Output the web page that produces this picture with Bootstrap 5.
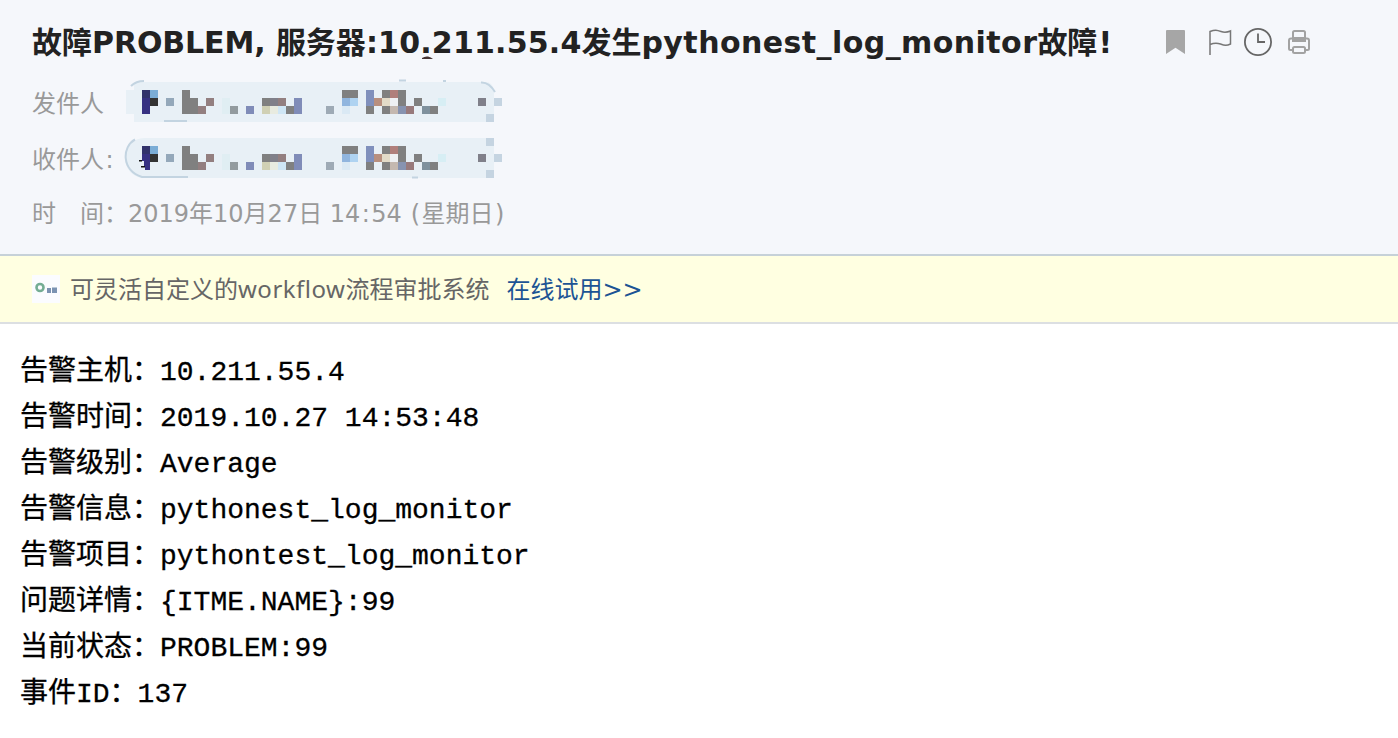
<!DOCTYPE html>
<html lang="zh-CN">
<head>
<meta charset="utf-8">
<title>故障PROBLEM</title>
<meta name="viewport" content="width=device-width, initial-scale=1">
<link href="https://cdn.jsdelivr.net/npm/bootstrap@5.3.0/dist/css/bootstrap.min.css" rel="stylesheet">
<style>
body{font-family:"DejaVu Sans","Noto Sans CJK SC",sans-serif;font-size:24px;background:#fff;color:#000;overflow:hidden}
.mail-head{height:256px;background:#f5f7fb;border-bottom:2px solid #c6d1d8;padding:20px 32px 0}
.mail-title{font-size:30px;font-weight:700;line-height:46px;height:46px;color:#222;width:1132px;margin:0}
.mail-title .lat{letter-spacing:-.1px}
.mail-title .ip{letter-spacing:.2px}
.mail-title .item{letter-spacing:.43px}
.mail-title .bang{margin-left:1px}
.speck{left:390px;top:36px}
.tools{padding-top:8px;height:46px}
.meta-wrap{height:112px}
.meta-labels{width:94px;padding-top:20px;row-gap:20px}
.meta-row{color:#999;line-height:36px}
.meta-time{margin-top:18px}
.colon{margin:0 1.4px}
.mosaic{margin:12px 0 0 -2px}
.ad-bar{height:68px;background:#ffffe1;border-bottom:2px solid #dcdfe2;padding:0 32px;color:#666;font-family:"Noto Sans","Noto Sans CJK SC",sans-serif}
.ad-bar a{color:#1d5494;margin-left:17px}
.ad-text{margin-left:10px}
.wf{letter-spacing:.5px}
.gt{font-family:"DejaVu Sans",sans-serif;line-height:1}
.mail-body{font-family:"Liberation Mono","Noto Sans CJK SC",monospace;font-size:28px;line-height:46px;padding:26px 20px;-webkit-text-stroke:.3px #000}
</style>
</head>
<body>
<header class="mail-head">
  <div class="d-flex">
    <h1 class="mail-title text-nowrap position-relative">故障<span class="lat">PROBLEM, </span>服务器<span class="ip">:10.211.55.4</span>发生<span class="item">pythonest_log_monitor</span>故障<span class="bang">!</span><svg class="speck position-absolute" width="11" height="4" viewBox="0 0 11 4"><path d="M0 2q3-2 6-1.500Q9 1 11 3H0z" fill="#433"/></svg></h1>
    <div class="tools">
      <svg class="d-block" width="148" height="30" viewBox="1164 28 148 30" fill="none">
        <path d="M1167 30h17q1 0 1 1v23l-9.500-6.200-9.500 6.200V31q0-1 1-1z" fill="#a6a6a6"/>
        <path d="M1210 55V31.500c5-2 7-1.500 11 0s6 1 9.500-.5v13c-4 2-6 1.500-10 0s-6-1.500-10.500.5" stroke="#777" stroke-width="1.500"/>
        <circle cx="1258" cy="42" r="13.100" stroke="#666" stroke-width="1.800"/>
        <path d="M1258 33.500V42h7" stroke="#666" stroke-width="1.800"/>
        <g stroke="#a2a2a2" stroke-width="2"><path d="M1293 50h-2.500q-1.500 0-1.500-1.500v-8q0-2 2-2h16q2 0 2 2v8q0 1.500-1.500 1.500h-2.500"/><rect x="1293" y="31" width="12" height="10" rx="1.500"/><rect x="1293" y="47" width="12" height="6" rx="1.500"/></g>
        <path d="M1292 37h14v5h-14z" fill="#a2a2a2"/>
      </svg>
    </div>
  </div>
  <div class="d-flex meta-wrap">
    <div class="d-flex flex-column meta-row meta-labels"><span class="text-nowrap">发件人</span><span class="text-nowrap">收件人<span class="colon">:</span></span></div>
    <svg class="mosaic" width="380" height="102" viewBox="124 78 380 102">
      <defs><g id="cells" shape-rendering="crispEdges">
        <path fill="#32326b" d="M142 0h8v8h-8z"/><path fill="#373182" d="M142 8h8v16h-8z"/><path fill="#7badd6" d="M150 0h8v8h-8z"/><path fill="#333" d="M150 8h8v8h-8z"/>
        <path fill="#94a8ba" d="M166 8h8v8h-8z"/><path fill="#808080" d="M182 0h8v8h8v16h-16zM262 8h8v8h-8zM286 16h8v8h-8zM342 0h16v8h-16zM366 16h8v8h-8zM382 0h8v8h-8zM398 0h8v16h-8zM382 16h8v8h-8zM414 8h8v8h-8zM430 16h8v8h-8z"/>
        <path fill="#937f80" d="M198 16h8v8h-8zM206 8h8v8h-8zM278 8h8v8h-8z"/><path fill="#e0eef3" d="M222 8h8v16h-8z"/><path fill="#939b9f" d="M230 16h8v8h-8z"/>
        <path fill="#808cb8" d="M246 16h8v8h-8zM294 8h8v16h-8z"/><path fill="#80808a" d="M270 8h8v8h-8zM478 8h8v8h-8z"/><path fill="#d0d0b4" d="M262 16h8v8h-8z"/><path fill="#e8ebe0" d="M270 16h8v8h-8z"/><path fill="#cfe6f5" d="M278 16h8v8h-8z"/>
        <path fill="#9eaab5" d="M326 16h8v8h-8z"/><path fill="#90b5de" d="M342 8h8v8h-8z"/><path fill="#afd3f1" d="M350 8h8v8h-8z"/><path fill="#dae9f4" d="M342 16h8v8h-8z"/><path fill="#8090bc" d="M366 0h8v16h-8z"/><path fill="#b88f7e" d="M374 8h8v8h-8z"/><path fill="#b07f7b" d="M390 0h8v8h-8z"/>
        <path fill="#e3dbc8" d="M382 8h8v8h-8z"/><path fill="#eef0f3" d="M390 8h8v8h-8z"/><path fill="#c4b8b0" d="M390 16h8v8h-8z"/><path fill="#8793b0" d="M398 16h8v8h-8z"/><path fill="#987a7c" d="M406 16h8v8h-8z"/><path fill="#7f919d" d="M422 16h8v8h-8z"/><path fill="#d7eef4" d="M438 8h8v8h-8z"/><path fill="#c5d4e1" d="M494 8h8v8h-8zM486 24h8v8h-8z"/>
      </g></defs>
      <path fill="#e8f0f6" d="M134 82h352q6 0 8 8v32H134v-8h-8V90h8z"/>
      <path fill="none" stroke="#c3d4e1" stroke-width="2" d="M131 86q5-5 13-5M164 121h23M399 80.500h7M443 81h3M481 82.500q8-.5 14 9.500"/>
      <path fill="#e8f0f6" d="M144 138h350v40H144a19 20 0 0 1 0-40z"/>
      <path fill="none" stroke="#c3d4e1" stroke-width="2" d="M135 139.500c-13 7-14 31 7 37.500h46M412 177.500h6"/>
      <use href="#cells" y="90"/><use href="#cells" y="146"/>
      <path fill="#c5d4e1" d="M486 138h8v8h-8z"/>
      <path fill="#e8f0f6" d="M142 161h2v5h1v4h-3z"/><path fill="#111" d="M139 160h3v1.500h-3zM141 166h4v1.500h-4z"/>
    </svg>
  </div>
  <div class="meta-row meta-time text-nowrap">时　间：2019年10月27日 <span class="ms-0">14<span class="colon">:</span>54</span> <span class="colon">(</span>星期日<span class="colon">)</span></div>
</header>
<section class="ad-bar d-flex align-items-center">
  <svg width="28" height="28" viewBox="0 0 28 28"><path fill="#fbfcff" d="M0 0h28v28H0z"/><circle cx="8" cy="12.500" r="3.500" fill="none" stroke="#74ad94" stroke-width="2.600"/><path d="M15 13h4v5h-4zM20 12.500h5v5.500h-5z" fill="#7b93b2"/></svg>
  <span class="ad-text">可灵活自定义的<span class="wf">workflow</span>流程审批系统</span><a href="#" class="text-decoration-none">在线试用<span class="gt">&gt;&gt;</span></a>
</section>
<main class="mail-body">
  <div>告警主机：10.211.55.4</div>
  <div>告警时间：2019.10.27 14:53:48</div>
  <div>告警级别：Average</div>
  <div>告警信息：pythonest_log_monitor</div>
  <div>告警项目：pythontest_log_monitor</div>
  <div>问题详情：{ITME.NAME}:99</div>
  <div>当前状态：PROBLEM:99</div>
  <div>事件ID：137</div>
</main>
<script src="https://cdn.jsdelivr.net/npm/bootstrap@5.3.0/dist/js/bootstrap.bundle.min.js"></script>
</body>
</html>
